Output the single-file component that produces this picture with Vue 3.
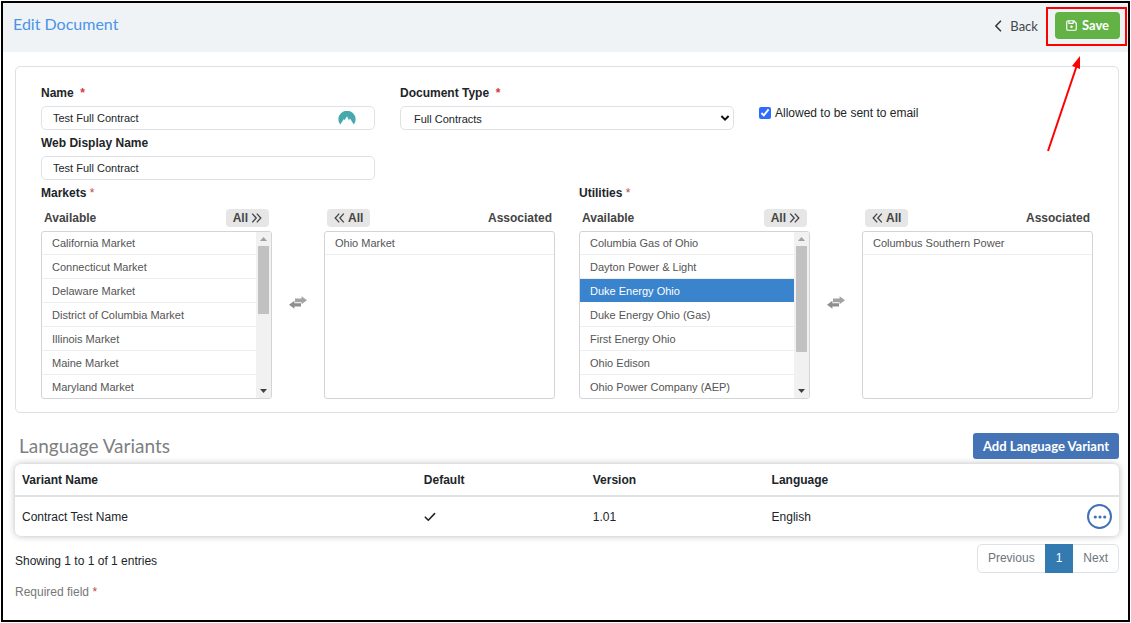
<script setup>
import { ref } from 'vue'

const name = ref('Test Full Contract')
const webName = ref('Test Full Contract')
const docType = ref('Full Contracts')
const emailAllowed = ref(true)

const pickers = [
  {
    id: 'markets',
    label: 'Markets',
    available: [
      'California Market',
      'Connecticut Market',
      'Delaware Market',
      'District of Columbia Market',
      'Illinois Market',
      'Maine Market',
      'Maryland Market',
    ],
    associated: ['Ohio Market'],
    selected: '',
    thumb: 49,
  },
  {
    id: 'utilities',
    label: 'Utilities',
    available: [
      'Columbia Gas of Ohio',
      'Dayton Power & Light',
      'Duke Energy Ohio',
      'Duke Energy Ohio (Gas)',
      'First Energy Ohio',
      'Ohio Edison',
      'Ohio Power Company (AEP)',
    ],
    associated: ['Columbus Southern Power'],
    selected: 'Duke Energy Ohio',
    thumb: 77,
  },
]

const variants = [{ name: 'Contract Test Name', isDefault: true, version: '1.01', language: 'English' }]
</script>

<template>
  <div class="frame">
    <header class="topbar">
      <h1>Edit Document</h1>
      <div class="actions">
        <a href="#" class="back">
          <svg width="8" height="12" viewBox="0 0 8 12" aria-hidden="true">
            <path d="M6.5 1.2 1.8 6l4.7 4.8" fill="none" stroke="#333a40" stroke-width="1.6" stroke-linecap="round" stroke-linejoin="round" />
          </svg>
          Back
        </a>
        <div class="save-wrap">
          <button type="button" class="save">
            <svg width="11" height="11" viewBox="0 0 12 12" aria-hidden="true">
              <g fill="none" stroke="#fff" stroke-width="1.3" stroke-linejoin="round">
                <path d="M2.2.8h6.3l2.7 2.7v6.3a1.4 1.4 0 0 1-1.4 1.4H2.2A1.4 1.4 0 0 1 .8 9.8V2.2A1.4 1.4 0 0 1 2.2.8z" />
                <path d="M3.2 1v2.7h4.6V1" />
              </g>
              <circle cx="6" cy="7.4" r="1.4" fill="#fff" />
            </svg>
            Save
          </button>
          <svg class="pointer" width="36" height="98" viewBox="0 0 36 98" aria-hidden="true">
            <path d="M2 96 31 10" stroke="#f00" stroke-width="2" />
            <path d="M34 1 34 14 26 11z" fill="#f00" />
          </svg>
        </div>
      </div>
    </header>

    <main class="content">
      <form class="card" @submit.prevent>
        <div class="fields">
          <div class="column">
            <label for="name">Name &nbsp;<span class="req">*</span></label>
            <div class="control">
              <input id="name" v-model="name" type="text" />
              <svg class="nord" width="18" height="14" viewBox="0 0 18 14" aria-hidden="true">
                <path d="M2.2 13.6A8.6 8.6 0 1 1 15.8 13.6L12 7.6l-1.1 1.7L9 5.3 6.6 9.2 5.9 8z" fill="#46a9ab" />
              </svg>
            </div>
            <label for="web">Web Display Name</label>
            <input id="web" v-model="webName" type="text" />
          </div>
          <div class="column">
            <label for="type">Document Type &nbsp;<span class="req">*</span></label>
            <div class="control">
              <select id="type" v-model="docType">
                <option>Full Contracts</option>
              </select>
              <svg class="chevron" width="10" height="8" viewBox="0 0 10 8" aria-hidden="true">
                <path d="M1.4 2 5 5.6 8.6 2" fill="none" stroke="#111" stroke-width="2" />
              </svg>
            </div>
          </div>
          <div class="column">
            <label class="check">
              <input v-model="emailAllowed" type="checkbox" />
              <span>Allowed to be sent to email</span>
            </label>
          </div>
        </div>

        <div class="pickers">
          <section v-for="p in pickers" :key="p.id">
            <h2>{{ p.label }} <span class="req soft">*</span></h2>
            <div class="picker">
              <div>
                <div class="list-head">
                  <span>Available</span>
                  <button type="button">
                    All
                    <svg width="11" height="10" viewBox="0 0 11 10" aria-hidden="true">
                      <path d="M1.2.6 5.2 5l-4 4.4M5.8.6 9.8 5l-4 4.4" fill="none" stroke="#444" stroke-width="1.3" />
                    </svg>
                  </button>
                </div>
                <div class="list">
                  <ul role="listbox" :aria-label="p.label + ' available'">
                    <li v-for="item in p.available" :key="item" role="option" :aria-selected="item === p.selected" :class="{ on: item === p.selected }">{{ item }}</li>
                  </ul>
                  <div class="scroll">
                    <svg width="7" height="4" viewBox="0 0 7 4" aria-hidden="true"><path d="M0 4 3.5 0 7 4z" fill="#a0a0a0" /></svg>
                    <div class="track"><div class="thumb" :style="{ height: p.thumb + '%' }"></div></div>
                    <svg width="7" height="4" viewBox="0 0 7 4" aria-hidden="true"><path d="M0 0 3.5 4 7 0z" fill="#404040" /></svg>
                  </div>
                </div>
              </div>
              <div class="swap">
                <svg width="18" height="13" viewBox="0 0 18 13" aria-hidden="true">
                  <path d="M6 2.4h6.6V.2L18 4.2l-5.4 4V6.2H6z" fill="#a3a3a3" />
                  <path d="M12 7.2H5.4V4.8L0 8.8l5.4 4v-2.2H12z" fill="#8e8e8e" />
                </svg>
              </div>
              <div>
                <div class="list-head">
                  <button type="button">
                    <svg width="11" height="10" viewBox="0 0 11 10" aria-hidden="true">
                      <path d="M5.2.6 1.2 5l4 4.4M9.8.6 5.8 5l4 4.4" fill="none" stroke="#444" stroke-width="1.3" />
                    </svg>
                    All
                  </button>
                  <span>Associated</span>
                </div>
                <div class="list">
                  <ul role="listbox" :aria-label="p.label + ' associated'">
                    <li v-for="item in p.associated" :key="item" role="option" aria-selected="false">{{ item }}</li>
                  </ul>
                </div>
              </div>
            </div>
          </section>
        </div>
      </form>

      <div class="section-head">
        <h2>Language Variants</h2>
        <button type="button">Add Language Variant</button>
      </div>

      <table>
        <colgroup>
          <col class="c-name" />
          <col class="c-default" />
          <col class="c-version" />
          <col />
          <col class="c-menu" />
        </colgroup>
        <thead>
          <tr>
            <th>Variant Name</th>
            <th>Default</th>
            <th>Version</th>
            <th>Language</th>
            <th></th>
          </tr>
        </thead>
        <tbody>
          <tr v-for="v in variants" :key="v.name">
            <td>{{ v.name }}</td>
            <td>
              <svg v-if="v.isDefault" width="12" height="10" viewBox="0 0 12 10" role="img" aria-label="Yes">
                <path d="M1.3 5.2 4.3 8.2 10.6 1.6" fill="none" stroke="#212529" stroke-width="1.6" stroke-linecap="round" stroke-linejoin="round" />
              </svg>
            </td>
            <td>{{ v.version }}</td>
            <td>{{ v.language }}</td>
            <td>
              <button type="button" class="more" aria-label="Row actions">
                <svg width="14" height="4" viewBox="0 0 14 4" aria-hidden="true">
                  <g fill="#4071b5"><circle cx="2.3" cy="2" r="1.6" /><circle cx="7" cy="2" r="1.6" /><circle cx="11.7" cy="2" r="1.6" /></g>
                </svg>
              </button>
            </td>
          </tr>
        </tbody>
      </table>

      <div class="table-foot">
        <span>Showing 1 to 1 of 1 entries</span>
        <nav aria-label="Pagination">
          <a href="#">Previous</a>
          <a href="#" class="current" aria-current="page">1</a>
          <a href="#">Next</a>
        </nav>
      </div>
      <p class="note">Required field <span class="req soft">*</span></p>
    </main>
  </div>
</template>

<style>
body {
  background: #fff;
}
</style>

<style scoped>
.frame,
.frame * {
  box-sizing: border-box;
}
.frame {
  margin: 1px;
  min-height: calc(100vh - 2px);
  border: 2px solid #000;
  color: #212529;
  font-family: 'Liberation Sans', Arial, sans-serif;
  font-size: 12px;
  line-height: 24px;
}
h1,
h2,
p,
ul {
  margin: 0;
  padding: 0;
}
button,
input,
select {
  margin: 0;
  font: inherit;
  color: inherit;
}
button {
  border: 0;
  display: inline-flex;
  align-items: center;
  cursor: pointer;
}
svg {
  display: block;
  flex: none;
}
a {
  color: inherit;
  text-decoration: none;
}
.topbar {
  display: flex;
  justify-content: space-between;
  align-items: flex-start;
  padding: 9px 8px 12px 10px;
  background: #f0f3f6;
}
h1 {
  font: 400 16px/24px Lato, sans-serif;
  color: #4a94ea;
}
.actions {
  display: flex;
  gap: 17px;
  font-family: Lato, sans-serif;
  font-size: 13px;
  line-height: 27px;
}
.back {
  display: flex;
  align-items: center;
  gap: 8px;
  color: #3f464c;
}
.save-wrap {
  position: relative;
}
.save-wrap::after {
  content: '';
  position: absolute;
  inset: -5px -7px -6px -9px;
  border: 2px solid #f00;
  pointer-events: none;
}
.save {
  height: 27px;
  padding: 0 11px;
  gap: 5px;
  border-radius: 4px;
  background: #62b245;
  color: #fff;
  font-weight: 700;
}
.pointer {
  position: absolute;
  top: 43px;
  right: 38px;
  z-index: 1;
  pointer-events: none;
}
.content {
  padding: 14px 9px 12px 12px;
}
.card {
  padding: 13px 25px;
  border: 1px solid #dee0e3;
  border-radius: 5px;
}
.fields {
  display: grid;
  grid-template-columns: repeat(3, 1fr);
  gap: 25px;
}
.column > label,
.pickers h2 {
  display: block;
  font-size: 12px;
  font-weight: 700;
  line-height: 26px;
}
.req {
  color: #dc3545;
}
.req.soft {
  color: #b94a4a;
}
.pickers .req {
  font-weight: 400;
}
.control {
  position: relative;
}
input[type='text'],
select {
  display: block;
  width: 100%;
  height: 24px;
  padding: 0 11px;
  border: 1px solid #dee2e6;
  border-radius: 5px;
  background: #fff;
  font-size: 11px;
}
select {
  appearance: none;
  padding: 0 13px 2px;
}
.nord {
  position: absolute;
  top: 5px;
  right: 19px;
}
.chevron {
  position: absolute;
  top: 8px;
  right: 4px;
  pointer-events: none;
}
.column > .check {
  display: flex;
  align-items: center;
  gap: 4px;
  padding-top: 20px;
  font-weight: 400;
}
.check input {
  width: 12px;
  height: 12px;
  accent-color: #2f6bff;
}
.pickers {
  display: grid;
  grid-template-columns: 1fr 1fr;
  gap: 24px;
}
.picker {
  display: grid;
  grid-template-columns: 1fr 52px 1fr;
}
.list-head {
  display: flex;
  justify-content: space-between;
  align-items: center;
  height: 25px;
  padding: 0 3px 1px;
  color: #444;
  font-weight: 700;
}
.list-head button {
  height: 18px;
  padding: 0 7px;
  gap: 3px;
  border-radius: 4px;
  background: #e6e6e6;
}
.list {
  display: flex;
  height: 168px;
  border: 1px solid #d2d4d6;
  border-radius: 3px;
  overflow: hidden;
}
.list ul {
  flex: 1;
  list-style: none;
  color: #555;
  font-size: 11px;
}
.list li {
  height: 24px;
  padding-left: 10px;
  border-bottom: 1px solid #eee;
  line-height: 24px;
}
.list li:first-child {
  height: 23px;
  line-height: 22px;
}
.list li.on {
  background: #3984cd;
  border-color: #fff;
  color: #fff;
}
.scroll {
  display: flex;
  flex-direction: column;
  align-items: center;
  gap: 5px;
  width: 15px;
  padding: 5px 2px;
  background: #f1f1f1;
}
.track {
  flex: 1;
  width: 11px;
}
.thumb {
  background: #c1c1c1;
}
.swap {
  display: flex;
  justify-content: center;
  align-items: center;
}
.section-head {
  display: flex;
  justify-content: space-between;
  align-items: center;
  padding: 20px 0 5px 4px;
}
.section-head h2 {
  font: 400 19px/26px Lato, sans-serif;
  color: #7d7f82;
}
.section-head button {
  height: 26px;
  padding: 0 10px;
  border-radius: 3px;
  background: #4474b6;
  color: #fff;
  font: 700 13px/26px Lato, sans-serif;
}
table {
  width: 100%;
  table-layout: fixed;
  border-spacing: 0;
  border-radius: 6px;
  background: #fff;
  box-shadow: 0 0 7px rgba(0, 0, 0, 0.28);
}
th,
td {
  padding: 0 7px;
  text-align: left;
}
th {
  height: 33px;
  border-bottom: 2px solid #dfe1e3;
}
td {
  height: 39px;
}
.c-name {
  width: 36.4%;
}
.c-default {
  width: 15.3%;
}
.c-version {
  width: 16.2%;
}
.c-menu {
  width: 39px;
}
.more {
  display: flex;
  width: 25px;
  height: 25px;
  padding: 0;
  justify-content: center;
  border: 2px solid #4071b5;
  border-radius: 50%;
  background: #fff;
}
.table-foot {
  display: flex;
  justify-content: space-between;
  align-items: center;
  padding-top: 7px;
}
.table-foot > span {
  padding-top: 6px;
}
nav {
  display: flex;
  border: 1px solid #dee2e6;
  border-radius: 5px;
  line-height: 27px;
  color: #6c757d;
}
nav a {
  padding: 0 10px;
}
nav .current {
  margin: -1px 0;
  padding: 1px 11px;
  background: #337ab0;
  color: #fff;
}
.note {
  padding-top: 7px;
  color: #777;
}
</style>
